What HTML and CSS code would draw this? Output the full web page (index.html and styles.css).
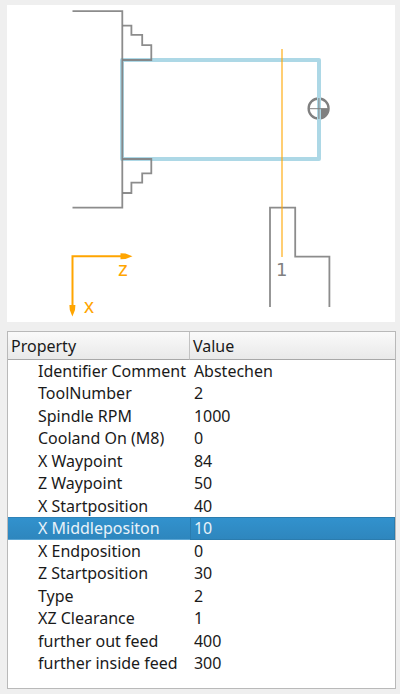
FILE: index.html
```html
<!DOCTYPE html>
<html lang="en">
<head>
    <meta charset="UTF-8">
    <meta name="viewport" content="width=device-width, initial-scale=1.0">
    <title>Abstechen</title>
    <link rel="stylesheet" href="styles.css">
</head>
<body>
    <div class="drawing">
        <svg viewBox="7 5 388 317" role="img" aria-label="Parting off">
            <!-- Zero point -->
            <g class="zero-point">
                <circle cx="318.6" cy="108.5" r="10"/>
                <path class="fill" d="M318.6 108.5h10a10 10 0 0 1-10 10z"/>
            </g>
            <!-- Stock -->
            <rect class="stock" x="122" y="60" width="197" height="99"/>
            <path class="cross" d="M308 108.7h21M318.9 98v21"/>
            <!-- Chuck -->
            <path class="line" d="M72.5 11.2h49.8v196.4H72.5"/>
            <path class="line" d="M122.3 25.6h9.1v9.2h10.8v10.4h9.1V60h-29"/>
            <path class="line" d="M122.3 193h9.1v-10.4h10.8v-9.3h9.1V159h-29"/>
            <!-- Tool -->
            <path class="line" d="M270 307V207.6h25.2v49h34.2V307"/>
            <path class="cut" d="M282 49v208"/>
            <text class="tool-label" x="276" y="276">1</text>
            <!-- Axes -->
            <path class="axis" d="M122 256.3H72.5V306"/>
            <path class="arrow" d="M120.5 253.3l5 .3 7 2.7-7 2.7-5 .3zM69.4 305l.4 5 2.6 6.5 2.6-6.5.4-5z"/>
            <text class="axis-label" x="118" y="276">z</text>
            <text class="axis-label" x="84" y="313">x</text>
        </svg>
    </div>

    <div class="properties">
        <table>
            <thead>
                <tr><th>Property</th><th>Value</th></tr>
            </thead>
            <tbody>
                <tr><td>Identifier Comment</td><td>Abstechen</td></tr>
                <tr><td>ToolNumber</td><td>2</td></tr>
                <tr><td>Spindle RPM</td><td>1000</td></tr>
                <tr><td>Cooland On (M8)</td><td>0</td></tr>
                <tr><td>X Waypoint</td><td>84</td></tr>
                <tr><td>Z Waypoint</td><td>50</td></tr>
                <tr><td>X Startposition</td><td>40</td></tr>
                <tr class="selected"><td>X Middlepositon</td><td>10</td></tr>
                <tr><td>X Endposition</td><td>0</td></tr>
                <tr><td>Z Startposition</td><td>30</td></tr>
                <tr><td>Type</td><td>2</td></tr>
                <tr><td>XZ Clearance</td><td>1</td></tr>
                <tr><td>further out feed</td><td>400</td></tr>
                <tr><td>further inside feed</td><td>300</td></tr>
            </tbody>
        </table>
    </div>
</body>
</html>
```
FILE: styles.css
```css
* {
    box-sizing: border-box;
}
body {
    margin: 0;
    padding: 5px 4px 5px 7px;
    min-height: 100vh;
    display: flex;
    flex-direction: column;
    gap: 9px;
    background-color: #efefef;
    font-family: "Noto Sans", "Open Sans", sans-serif;
    font-size: 16px;
    color: #1a1a1a;
}

/* Drawing */
.drawing {
    background-color: #fff;
    margin-right: 1px;
}
.drawing svg {
    display: block;
    width: 100%;
}
.line {
    fill: none;
    stroke: #808080;
    stroke-width: 1.8;
    stroke-opacity: 0.9;
}
.stock {
    fill: none;
    stroke: #add8e6;
    stroke-width: 4;
    stroke-linejoin: round;
}
.zero-point circle {
    fill: none;
    stroke: #808080;
    stroke-width: 2.3;
}
.zero-point .fill {
    fill: #808080;
}
.cross {
    stroke: #808080;
    stroke-width: 1;
}
.cut {
    stroke: #ffa500;
    stroke-width: 2;
    stroke-opacity: 0.55;
}
.axis {
    fill: none;
    stroke: #ffa500;
    stroke-width: 2;
}
.arrow {
    fill: #ffa500;
}
.axis-label {
    fill: #ffa500;
    font-family: "Liberation Sans", Arial, sans-serif;
    font-size: 20px;
}
.tool-label {
    fill: #808080;
    font-family: "DejaVu Sans", sans-serif;
    font-size: 18px;
}

/* Property table */
.properties {
    flex: 1;
    background-color: #fff;
    border: 1px solid #b9b9b9;
}
table {
    width: 100%;
    border-collapse: separate;
    border-spacing: 0;
    table-layout: fixed;
}
th {
    height: 28px;
    padding: 2px 3px 0;
    text-align: left;
    font-weight: normal;
    line-height: 25px;
    background-image: linear-gradient(#fafafa, #e9e9e9);
    border-bottom: 1px solid #a8a8a8;
}
th:first-child {
    width: 47%;
    border-right: 1px solid #c2c2c2;
}
td {
    padding: 0 0 0 4px;
    line-height: 22px;
    white-space: nowrap;
}
td:first-child {
    padding-left: 30px;
}
tr:nth-child(even) td {
    line-height: 23px;
}
.selected td {
    color: #e8f2f9;
    background-image: linear-gradient(#3292ce, #2e86bd);
    box-shadow: inset 0 1px #2f83b8, inset 0 -1px #5ba5d3;
}
.selected td:last-child {
    box-shadow: inset 0 0 0 1px #2b7cae;
}
```
